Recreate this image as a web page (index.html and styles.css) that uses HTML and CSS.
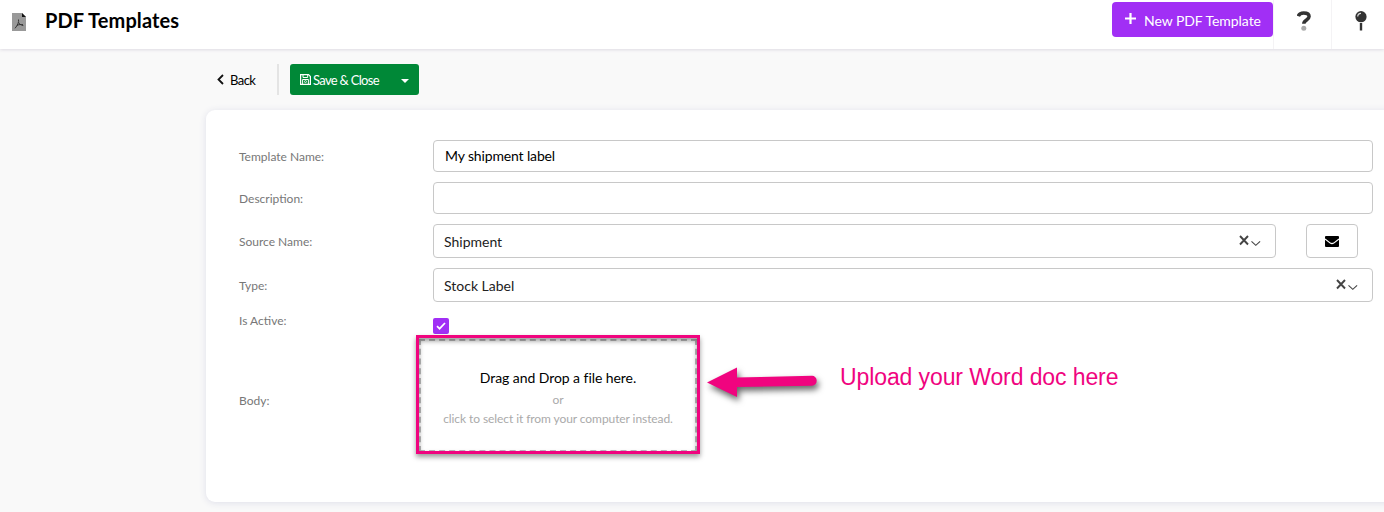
FILE: index.html
```html
<!DOCTYPE html>
<html lang="en">
<head>
<meta charset="utf-8">
<title>PDF Templates</title>
<link rel="stylesheet" href="styles.css">
</head>
<body>
<header class="topbar">
  <svg class="doc-icon" width="14" height="18" viewBox="0 0 14 18">
    <path d="M0 0h10l4 4v14H0z" fill="#999"/><path d="M10 0l4 4h-4z" fill="#111"/>
    <path d="M6.500 6.500C7.200 9 5.500 12.500 3 15.300M6.700 9.500c.8 1.700 2.200 2.600 4.600 3M5 12.300c2-.8 4-1 6-.6" fill="none" stroke="#333" stroke-width="1"/>
  </svg>
  <h1 class="title">PDF Templates</h1>
  <button class="new-btn">
    <svg width="11" height="11" viewBox="0 0 11 11"><path d="M5.500 0v11M0 5.500h11" stroke="#fff" stroke-width="2.200"/></svg>
    <span>New PDF Template</span>
  </button>
  <div class="tool tool-help">
    <svg width="14" height="20" viewBox="0 0 14 20"><path d="M1.300 5.200C2 2.800 4.100 1.900 6.700 1.900c3.200 0 5.400 1.400 5.400 3.700 0 3.500-5.300 3.300-5.300 7.200" fill="none" stroke="#333" stroke-width="3.500"/><circle cx="6.800" cy="17.200" r="2.500" fill="#aaa"/></svg>
  </div>
  <div class="tool tool-pin">
    <svg width="12" height="20" viewBox="0 0 12 20"><circle cx="6" cy="5.700" r="5.600" fill="#333"/><path d="M2.700 5.600A3.300 3.300 0 0 1 6 2.400" fill="none" stroke="#ddd" stroke-width="1.200"/><path d="M6 12v7.500" stroke="#333" stroke-width="2.400"/></svg>
  </div>
</header>
<main class="content">
  <nav class="toolbar">
    <a class="back"><svg width="7" height="11" viewBox="0 0 7 11"><path d="M6 1L1.500 5.500 6 10" fill="none" stroke="#111" stroke-width="1.800"/></svg><span>Back</span></a>
    <div class="save">
      <svg width="11" height="11" viewBox="0 0 11 11" fill="none" stroke="#fff"><path d="M.6.6h7.900l1.900 1.900v7.900H.6z" stroke-width="1.200"/><path d="M3 .8v2.700h4.700V.8M2.600 10V5.500h5.800V10" stroke-width="1"/><circle cx="5.500" cy="7.600" r="1" stroke-width=".8"/></svg>
      <span class="save-text">Save &amp; Close</span>
      <svg class="caret" width="8" height="4" viewBox="0 0 8 4"><path d="M0 0h8L4 4z" fill="#fff"/></svg>
    </div>
  </nav>
  <section class="card">
    <div class="row row-input"><label class="label" for="name">Template Name:</label><input class="field" id="name" value="My shipment label"></div>
    <div class="row row-input"><label class="label" for="desc">Description:</label><input class="field" id="desc"></div>
    <div class="row row-select">
      <span class="label">Source Name:</span>
      <div class="select"><span class="value">Shipment</span>
        <svg class="controls" width="22" height="12" viewBox="0 0 22 12" fill="none"><path d="M1 1l8 8.500M9 1L1 9.500" stroke="#444" stroke-width="1.900"/><path d="M12.500 6.300l4.300 4 4.300-4" stroke="#444" stroke-width="1.100"/></svg>
      </div>
      <button class="mail"><svg width="14" height="11" viewBox="0 0 14 11"><rect width="14" height="11" rx="1"/><path d="M0 3l5.300 4.100q1.700 1.200 3.400 0L14 3" fill="none" stroke="#fff" stroke-width="1.200"/></svg></button>
    </div>
    <div class="row row-select">
      <span class="label">Type:</span>
      <div class="select"><span class="value">Stock Label</span>
        <svg class="controls" width="22" height="12" viewBox="0 0 22 12" fill="none"><path d="M1 1l8 8.500M9 1L1 9.500" stroke="#444" stroke-width="1.900"/><path d="M12.500 6.300l4.300 4 4.300-4" stroke="#444" stroke-width="1.100"/></svg>
      </div>
    </div>
    <div class="row row-check">
      <span class="label">Is Active:</span>
      <span class="check"><svg width="10" height="8" viewBox="0 0 10 8"><path d="M1 4.200l2.600 2.500L9 1" fill="none" stroke="#fff" stroke-width="1.700"/></svg></span>
    </div>
    <div class="row row-body">
      <span class="label">Body:</span>
      <div class="drop">
        <div class="drop-title">Drag and Drop a file here.</div>
        <div class="drop-or">or</div>
        <div class="drop-hint">click to select it from your computer instead.</div>
        <div class="highlight"></div>
      </div>
    </div>
  </section>
</main>
<svg class="arrow" width="120" height="46" viewBox="0 0 120 46"><path d="M3 20.500L33 5.500v10L108 13.800a4.700 5 0 0 1 0 10L33 25v10z" fill="#f0047f"/></svg>
<div class="note">Upload your Word doc here</div>
</body>
</html>
```

FILE: styles.css
```css
* { box-sizing: border-box; }
body {
  margin: 0;
  width: 1384px;
  height: 512px;
  overflow: hidden;
  position: relative;
  background: #f9f9f9;
  font-family: Lato, "Open Sans", sans-serif;
  color: #000;
}
button { font-family: inherit; margin: 0; }
svg { display: block; flex: none; }
.topbar {
  display: flex;
  height: 49px;
  background: #fff;
  box-shadow: 0 1px 3px #dedbe3;
  position: relative;
}
.doc-icon { margin: 13px 0 0 12px; }
.title { margin: 8px 0 0 19px; font-size: 20px; line-height: 25px; font-weight: 700; letter-spacing: .1px; white-space: nowrap; }
.new-btn {
  display: flex;
  align-items: center;
  gap: 8px;
  margin: 2px 0 0 auto;
  width: 161px;
  height: 35px;
  padding: 0 0 0 13px;
  border: 0;
  border-radius: 4px;
  background: #a12ff5;
  color: #fff;
  font-size: 14px;
  letter-spacing: -.05px;
  white-space: nowrap;
}
.new-btn svg { margin-top: -2px; }
.new-btn span { margin-top: 1px; }
.tool { border-left: 1px solid #f4f3f5; height: 49px; }
.tool-help { width: 58px; padding: 11px 0 0 23px; }
.tool-pin { width: 53px; padding: 11px 0 0 23px; }
.toolbar { display: flex; height: 61px; padding: 15px 0 0 217px; }
.back {
  display: flex;
  align-items: center;
  gap: 6px;
  width: 62px;
  height: 31px;
  border-right: 2px solid #e4e4e4;
  font-size: 13px;
  letter-spacing: -.55px;
}
.save {
  display: flex;
  align-items: center;
  width: 129px;
  height: 31px;
  margin-left: 11px;
  padding-left: 10px;
  border-radius: 3px;
  background: #008837;
  color: #fff;
  font-size: 13px;
}
.save-text { width: 67px; margin-left: 2px; letter-spacing: -.7px; white-space: nowrap; }
.caret { margin: 2px 0 0 21px; }
.card {
  display: flex;
  flex-direction: column;
  gap: 10px;
  width: 1200px;
  height: 392px;
  margin-left: 206px;
  padding: 30px 22px 0 33px;
  border-radius: 9px;
  background: #fff;
  box-shadow: 0 1px 7px #dedfe9;
}
.row { display: flex; align-items: center; width: 1134px; flex: none; }
.row-input { height: 32px; }
.row-select { height: 34px; }
.label { width: 194px; flex: none; color: #777; font-size: 12px; line-height: 15px; }
.field, .select, .mail { border: 1px solid #c8c8c8; border-radius: 4px; background: #fff; }
.field {
  flex: 1;
  height: 32px;
  padding: 0 11px 2px;
  font: 14px/20px Lato, sans-serif;
  letter-spacing: -.14px;
  outline: 0;
}
.select {
  display: flex;
  align-items: center;
  justify-content: space-between;
  flex: 1;
  height: 34px;
  padding: 0 14px 0 10px;
  font-size: 14px;
  color: #222;
}
.value { line-height: 20px; margin-top: 2px; }
.mail { display: flex; align-items: center; justify-content: center; width: 52px; height: 34px; margin: 0 15px 0 30px; padding: 0; }
.row-check { height: 24px; }
.row-check .label { margin-top: -8px; }
.check {
  display: flex;
  align-items: center;
  justify-content: center;
  align-self: flex-start;
  width: 16px;
  height: 16px;
  margin-top: 6px;
  border-radius: 2px;
  background: #a12ff5;
}
.row-body { height: 113px; margin-top: -7px; }
.row-body .label { width: 180px; margin-top: 10px; }
.drop {
  position: relative;
  width: 278px;
  height: 113px;
  padding-top: 27px;
  border: 2px dashed #bbb;
  text-align: center;
  white-space: nowrap;
}
.drop-title { font-size: 14px; line-height: 20px; letter-spacing: -.06px; }
.drop-or, .drop-hint { color: #aaa; font-size: 12px; line-height: 19px; letter-spacing: -.08px; }
.drop-or { margin-top: 2px; }
.highlight {
  position: absolute;
  inset: -6px -5px -4px -5px;
  border: 3px solid #f0047f;
  box-shadow: 0 3px 5px #0006, inset 0 3px 5px #0006;
}
.arrow { position: absolute; left: 704px; top: 362px; filter: drop-shadow(2px 4px 3px #0009); }
.note { position: absolute; left: 840px; top: 362px; color: #f0047f; font: 23px/30px "Liberation Sans", sans-serif; letter-spacing: -.1px; white-space: nowrap; }
```
